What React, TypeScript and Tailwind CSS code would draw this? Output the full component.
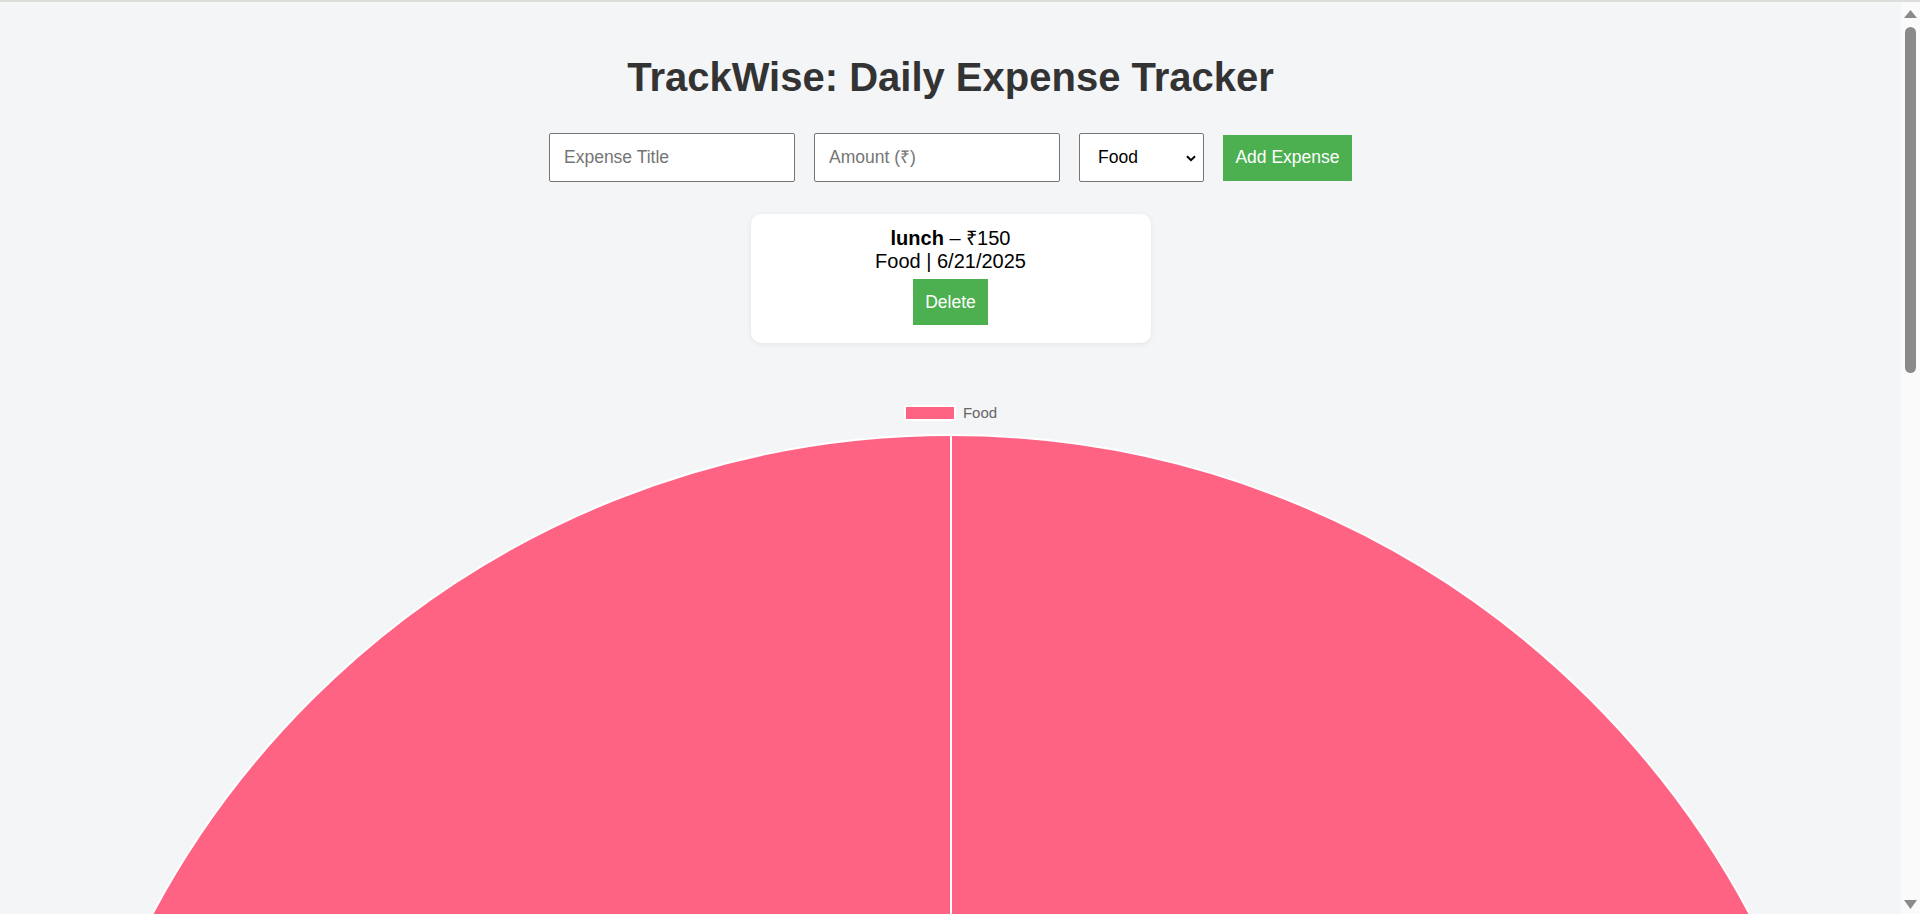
import { useState } from "react";

const Scrollbar = () => {
  return (
    <div className="flex-none w-[19px] flex flex-col items-center bg-[#fafafa]">
      <svg width="13" height="8" viewBox="0 0 13 8" className="mt-[8px] flex-none">
        <polygon points="6.5,0 13,8 0,8" fill="#8a8a8a" />
      </svg>
      <div className="flex-none mt-[9px] w-[11px] h-[346px] rounded-full bg-[#8a8a8a]" />
      <div className="flex-auto" />
      <svg width="13" height="9" viewBox="0 0 13 9" className="mb-[5px] flex-none">
        <polygon points="0,0 13,0 6.5,9" fill="#8a8a8a" />
      </svg>
    </div>
  );
};

const PieChart = () => {
  return (
    <svg width="1814" height="500" viewBox="0 0 1814 500" className="mt-[11px] flex-none">
      <circle cx="907" cy="908" r="905" fill="#FF6384" stroke="#ffffff" strokeWidth="2" />
      <line x1="907" y1="3" x2="907" y2="908" stroke="#ffffff" strokeWidth="2" />
    </svg>
  );
};

const App = () => {
  const [category, setCategory] = useState("Food");

  return (
    <div className="h-screen flex flex-col overflow-hidden bg-[#f4f5f7] font-['Liberation_Sans',Arial,sans-serif]">
      <div className="flex-none h-[2px] bg-[#dcdedc]" />
      <div className="flex flex-auto min-h-0">
        <main className="flex-auto min-w-0 overflow-hidden flex flex-col items-center">
          <h1 className="flex-none mt-[52px] text-[40px] leading-[46px] font-bold text-[#333333]">
            TrackWise: Daily Expense Tracker
          </h1>

          <div className="flex-none mt-[33px] flex items-center gap-[19px]">
            <input
              type="text"
              placeholder="Expense Title"
              className="w-[246px] h-[49px] pl-[14px] pr-3 bg-white border border-[#767676] rounded-[2px] text-[17.5px] text-black placeholder:text-[#757575] outline-none"
            />
            <input
              type="text"
              placeholder="Amount (₹)"
              className="w-[246px] h-[49px] pl-[14px] pr-3 bg-white border border-[#767676] rounded-[2px] text-[17.5px] text-black placeholder:text-[#757575] outline-none"
            />
            <div className="relative w-[125px] h-[49px]">
              <select
                value={category}
                onChange={(e) => setCategory(e.target.value)}
                className="w-full h-full appearance-none pl-[18px] bg-white border border-[#767676] rounded-[2px] text-[17.5px] text-black outline-none"
              >
                <option>Food</option>
                <option>Travel</option>
                <option>Shopping</option>
                <option>Other</option>
              </select>
              <svg width="10" height="7" viewBox="0 0 10 7" className="absolute right-[8px] top-[22px] pointer-events-none">
                <path d="M1 1.2 L5 5.2 L9 1.2" fill="none" stroke="#000" strokeWidth="2" />
              </svg>
            </div>
            <button className="w-[129px] h-[46px] bg-[#4caf50] text-white text-[17.5px]">Add Expense</button>
          </div>

          <div className="flex-none mt-[32px] w-[400px] h-[129px] flex flex-col items-center pt-[12.5px] bg-white rounded-[10px] shadow-[0_1px_5px_rgba(0,0,0,0.08)] text-[20px] leading-[23px] text-black">
            <div>
              <span className="font-bold">lunch</span> – ₹150
            </div>
            <div>Food | 6/21/2025</div>
            <button className="mt-[6.5px] w-[75px] h-[46px] bg-[#4caf50] text-white text-[17.5px] leading-[20px]">Delete</button>
          </div>

          <div className="flex-none mt-[62px] flex items-center gap-[7px]">
            <div className="w-[52px] h-[16px] border-2 border-white bg-[#FF6384]" />
            <span className="text-[15px] leading-[16px] text-[#666666]">Food</span>
          </div>

          <PieChart />
        </main>
        <Scrollbar />
      </div>
    </div>
  );
};

export default App;
